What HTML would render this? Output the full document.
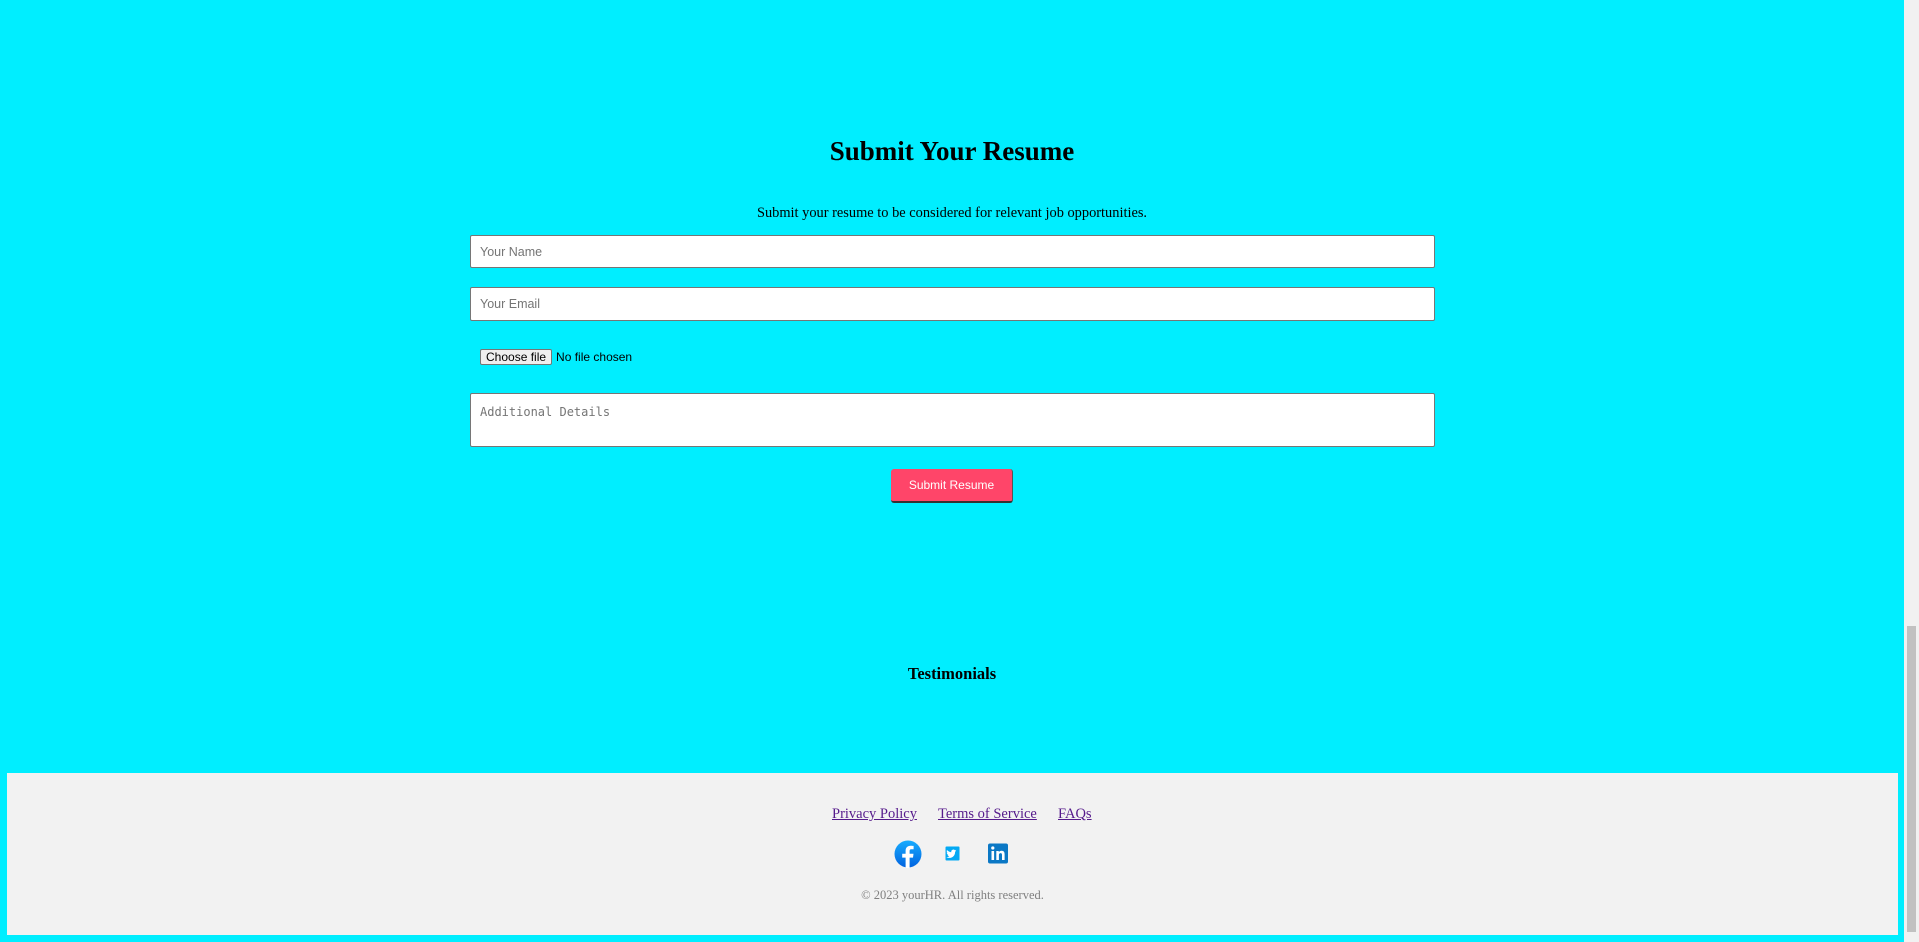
<!DOCTYPE html>
<html><head><style>
html,body{margin:0;padding:0}
body{width:1919px;height:942px;background:#00eeff;position:relative;overflow:hidden;font-family:"Liberation Serif",serif}
.abs{position:absolute}
h2{position:absolute;margin:0;left:0;width:1904px;text-align:center;top:133px;font-size:27px;font-weight:bold;line-height:36px}
.sub{left:0;width:1904px;text-align:center;top:203px;font-size:14.4px;line-height:20px}
.inp{left:470px;width:965px;background:#fff;border:1px solid #767676;border-radius:2px;box-sizing:border-box;font-family:"Liberation Sans",sans-serif;font-size:12.5px;color:#757575;padding-left:9px}
.fb{left:480px;top:349px;font-family:"Liberation Sans",sans-serif;font-size:12px;line-height:17px}
.fb span.b{display:inline-block;border:1px solid #767676;background:#efefef;border-radius:2px;padding:0 5px;height:16px;line-height:15px;box-sizing:border-box;margin-right:4px}
.btn{left:891px;top:469px;width:122px;height:34px;background:#ff4569;border-radius:3px;border-bottom:2px solid #333;border-right:1px solid #555;box-sizing:border-box;color:#fff;font-family:"Liberation Sans",sans-serif;font-size:12px;text-align:center;line-height:32px}
.test{left:0;width:1904px;text-align:center;top:663px;font-size:16.5px;font-weight:bold;line-height:22px}
.foot{left:7px;top:773px;width:1891px;height:162px;background:#f2f2f2}
.links a{position:absolute;top:32px;color:#551a8b;font-size:14.5px;text-decoration:underline;line-height:18px}
.copy{position:absolute;left:0;width:1891px;text-align:center;top:115px;color:#808080;font-size:12.5px}
.sb{left:1904px;top:0;width:15px;height:942px;background:#f1f1f1}
</style></head><body>
<h2>Submit Your Resume</h2>
<div class="abs sub">Submit your resume to be considered for relevant job opportunities.</div>
<div class="abs inp" style="top:235px;height:33px;line-height:33px">Your Name</div>
<div class="abs inp" style="top:287px;height:34px;line-height:32px">Your Email</div>
<div class="abs fb"><span class="b">Choose file</span>No file chosen</div>
<div class="abs inp" style="top:393px;height:54px;font-family:'DejaVu Sans Mono',monospace;font-size:12px;line-height:14px;padding-top:11px">Additional Details</div>
<div class="abs btn">Submit Resume</div>
<div class="abs test">Testimonials</div>
<div class="abs foot">
 <div class="links"><a style="left:825px">Privacy Policy</a><a style="left:931px">Terms of Service</a><a style="left:1051px">FAQs</a></div>
 <svg class="abs" style="left:887px;top:67px" width="28" height="28" viewBox="0 0 28 28"><defs><linearGradient id="g" x1="0" y1="0" x2="0" y2="1"><stop offset="0" stop-color="#18acfe"/><stop offset="1" stop-color="#0163e0"/></linearGradient></defs><circle cx="14" cy="14" r="13.5" fill="url(#g)"/><path d="M15.6 28V17.6h3.4l.5-3.9h-3.9v-2.5c0-1.1.3-1.9 1.9-1.9h2.1V5.9c-.4 0-1.6-.2-3-.2-3 0-5 1.8-5 5.1v2.9H8.2v3.9h3.4V28z" fill="#fff"/></svg>
 <svg class="abs" style="left:932px;top:67px" width="27" height="27" viewBox="0 0 27 27"><rect x="6.5" y="6.5" width="14" height="14" rx="1" fill="#03a9f4"/><path d="M17.5 10.6c-.4.2-.8.3-1.2.3.4-.3.7-.6.9-1.1-.4.2-.9.4-1.3.5a2.1 2.1 0 0 0-3.6 1.9c-1.7-.1-3.2-.9-4.3-2.2-.6 1-.3 2.2.6 2.8-.3 0-.6-.1-.9-.3 0 1 .7 1.9 1.7 2.1-.3.1-.6.1-1 0 .3.9 1.1 1.5 2 1.5-.9.7-2 1.1-3.1.9 3.9 2.5 9-.3 8.8-5.3.4-.3.8-.7 1.1-1.1z" fill="#fff"/></svg>
 <svg class="abs" style="left:977px;top:67px" width="27" height="27" viewBox="0 0 27 27"><rect x="4" y="3.5" width="20" height="20" rx="2" fill="#0b78c5"/><rect x="7.5" y="11" width="2.6" height="9" fill="#fff"/><circle cx="8.8" cy="8" r="1.6" fill="#fff"/><path d="M12.3 11h2.5v1.3c.5-.9 1.5-1.5 2.8-1.5 2.4 0 3 1.5 3 3.6V20h-2.6v-5c0-1.2-.4-1.9-1.4-1.9-1.2 0-1.700.9-1.700 1.9v5h-2.6z" fill="#fff"/></svg>
 <div class="copy">© 2023 yourHR. All rights reserved.</div>
</div>
<div class="abs sb"><div style="position:absolute;left:3px;top:626px;width:9px;height:306px;background:#c1c1c1"></div></div>
</body></html>
